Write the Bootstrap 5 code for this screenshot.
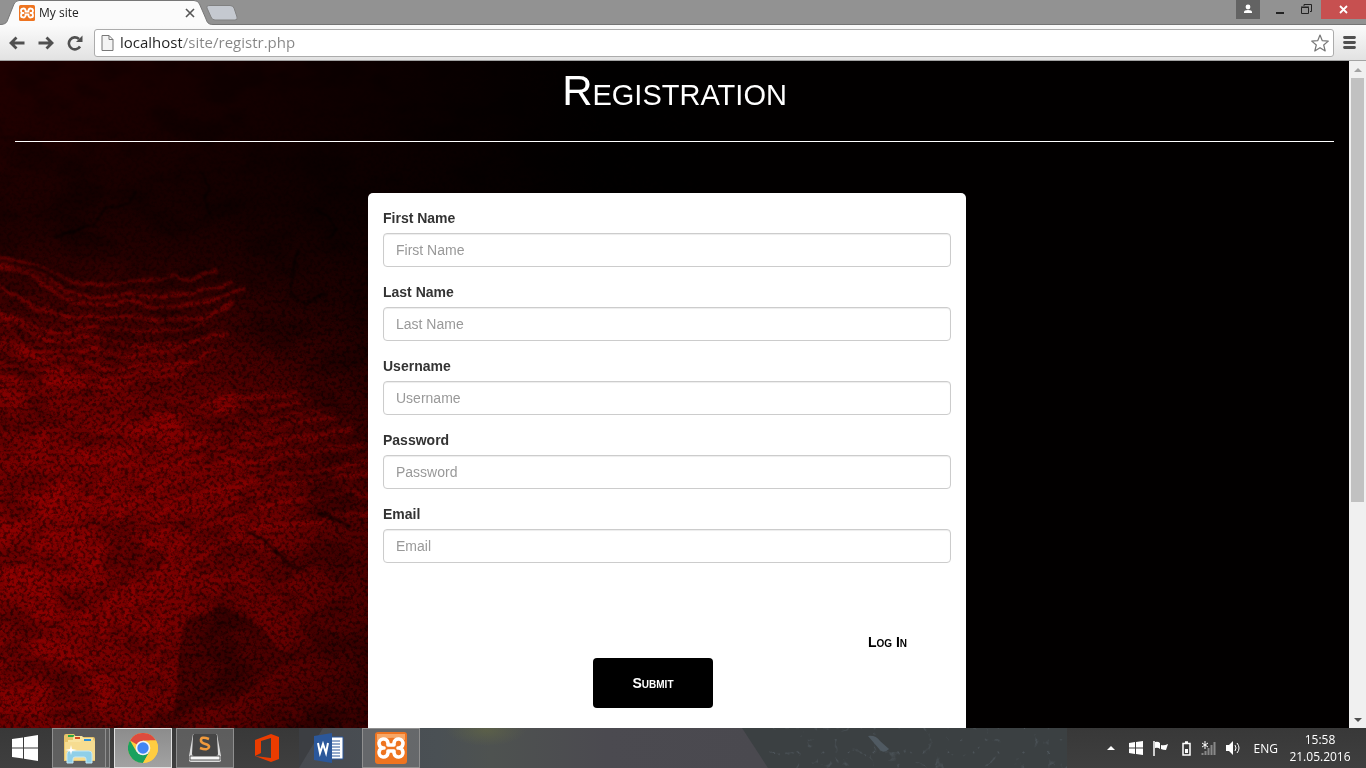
<!DOCTYPE html>
<html lang="en">
<head>
<meta charset="utf-8">
<meta name="viewport" content="width=device-width, initial-scale=1">
<title>My site</title>
<link href="https://cdn.jsdelivr.net/npm/bootstrap@5.3.0/dist/css/bootstrap.min.css" rel="stylesheet">
<style>
body { font-family: "Liberation Sans", Arial, sans-serif; font-size: 14px; line-height: 20px; background: #000; color: #333; }
button { font: inherit; }
svg { display: block; flex: none; }
.ui-font { font-family: "Open Sans", "Noto Sans", sans-serif; }
.bare { background: none; border: 0; padding: 0; }

/* browser window */
.tabstrip { height: 24px; background: #929292; }
.site-tab { width: 213px; height: 25px; padding: 0 18px 0 19px; z-index: 2; }
.tab-shape { position: absolute; inset: 0; }
.tab-title { font-size: 12px; color: #222; }
.new-tab { margin-left: -8px; padding-top: 5px; }
.win-btn { height: 19px; width: 26px; display: flex; align-items: center; justify-content: center; }
.win-user { background: #636363; width: 24px; margin-right: 7px; }
.win-close { background: #c75050; width: 45px; margin-left: 2px; }
.toolbar { height: 37px; background: linear-gradient(#fbfbfb, #e2e2e2); border-top: 1px solid #747474; border-bottom: 1px solid #a3a3a3; padding: 0 10px 0 9px; }
.nav-tools { gap: 13px; margin-right: 11px; }
.address { height: 28px; border: 1px solid #acacac; border-radius: 3px; background: #fff; padding: 0 4px 0 6px; margin-right: 9px; }
.address-input { font-size: 15px; line-height: 20px; outline: 0; min-width: 0; padding: 0 0 2px 2px; color: #858585; background: linear-gradient(90deg, #222 64px, #858585 64px); -webkit-background-clip: text; background-clip: text; -webkit-text-fill-color: transparent; }

/* page */
.page-body { background: #020000; }
.page-bg { position: absolute; inset: 0; width: 100%; height: 100%; }
.page-title { font-size: 42px; line-height: 46px; color: #fff; font-variant: small-caps; font-weight: 400; padding-top: 7px; margin: 0; }
.page-rule { margin: 27px 15px 51px; border-top: 1px solid #fff; opacity: 1; }
.form-grid { display: grid; grid-template-columns: 368fr 598fr 383fr; }
.signup { grid-column: 2; background: #fff; border-radius: 5px; padding: 15px 15px 60px; }
.signup .form-label { font-weight: 700; margin-bottom: 5px; display: block; }
.signup .form-control { height: 34px; padding: 6px 12px; font-size: 14px; line-height: 20px; border: 1px solid #ccc; border-radius: 4px; box-shadow: inset 0 1px 1px rgba(0,0,0,.075); }
.signup .form-control::placeholder { color: #999; }
.field { margin-bottom: 15px; }
.login-row { margin-top: 69px; padding-right: 44px; }
.login-link { color: #000; font-weight: 700; font-variant: small-caps; text-decoration: none; }
.submit-row { margin-top: 6px; padding-right: 28px; }
.submit-btn { width: 120px; height: 50px; background: #000; color: #fff; border: 0; border-radius: 4px; font-weight: 700; font-variant: small-caps; }

/* page scrollbar */
.scroll-col { width: 17px; background: #f0f0f0; }
.scroll-arrow { height: 17px; }
.scroll-thumb { height: 67%; width: 13px; background: #c1c1c1; }

/* taskbar */
.taskbar { height: 40px; background: linear-gradient(#383838, #3f3f3f); color: #fff; font-size: 12px; line-height: 17px; }
.wallpaper { position: absolute; left: 299px; top: 0; width: 768px; max-width: 60%; height: 40px; }
.start-btn { width: 52px; padding-left: 12px; }
.task-btn { width: 58px; height: 40px; margin-right: 4px; display: flex; align-items: center; justify-content: center; border: 1px solid transparent; padding: 0; background: none; }
.task-open { background: rgba(130,130,130,.5); border-color: #8f8f8f; }
.task-active { background: linear-gradient(#8c8c8c, #a2a2a2); border-color: #e0e0e0; }
.task-stack { width: 54px; margin-right: 0; }
.stack-edge { width: 4px; height: 40px; margin-right: 4px; background: #5d5d5d; border: 1px solid #8f8f8f; border-left: 0; }
.tray { gap: 10px; padding-right: 14px; }
.tray-gap { margin-right: 4px; }
.clock { width: 64px; }
</style>
</head>
<body>
<div class="vh-100 d-flex flex-column overflow-hidden">

  <header class="flex-shrink-0">
    <div class="tabstrip d-flex align-items-start ui-font">
      <div class="site-tab position-relative d-flex align-items-center">
        <svg class="tab-shape" width="213" height="25" viewBox="0 0 213 25" aria-hidden="true">
          <path d="M0 24.500C6 24.500 7 22 8 19L14 4Q15.500 .5 19 .5H194Q198 .5 199.500 4L206 19C207 22 208 24.500 213 24.500V26H0Z" fill="#fbfbfb" stroke="#777"/>
        </svg>
        <svg class="position-relative" width="16" height="16" viewBox="0 0 32 32" aria-hidden="true"><rect width="32" height="32" rx="3" fill="#ee7420"/><path d="M13 11A4.500 4.500 0 1 0 9 16A4.500 4.500 0 1 0 13 21V19H19V21A4.500 4.500 0 1 0 23 16A4.500 4.500 0 1 0 19 11V13H13Z" fill="none" stroke="#fff" stroke-width="3.600" stroke-linejoin="round"/></svg>
        <span class="position-relative tab-title ms-1 flex-grow-1">My site</span>
        <button class="bare position-relative" aria-label="Close tab"><svg width="10" height="10" viewBox="0 0 10 10"><path d="M1 1l8 8M9 1L1 9" stroke="#555" stroke-width="1.600"/></svg></button>
      </div>
      <button class="bare new-tab" aria-label="New tab"><svg width="34" height="16" viewBox="0 0 34 16"><path d="M5 .5H25Q28 .5 29 3L32 12Q33 15 30 15H10Q7 15 6 12L2 3Q1 .5 5 .5Z" fill="#c5c9d0" stroke="#818181"/></svg></button>
      <div class="ms-auto d-flex">
        <button class="bare win-btn win-user" aria-label="Profile"><svg width="10" height="12" viewBox="0 0 10 12" fill="#fff"><circle cx="5" cy="3" r="2.400"/><path d="M1 9V8Q1 6 5 6T9 8V9Z"/></svg></button>
        <button class="bare win-btn" aria-label="Minimize"><svg width="10" height="12" viewBox="0 0 10 12"><path d="M1 9H9" stroke="#222" stroke-width="2"/></svg></button>
        <button class="bare win-btn" aria-label="Restore"><svg width="11" height="11" viewBox="0 0 11 11" fill="none" stroke="#222"><path d="M3 2V.5H10.500V7.500H9"/><path d="M.5 3.500H7.500V9.500H.5ZM0 3H8"/></svg></button>
        <button class="bare win-btn win-close" aria-label="Close"><svg width="9" height="9" viewBox="0 0 9 9"><path d="M1 1l7 7M8 1L1 8" stroke="#fff" stroke-width="1.800"/></svg></button>
      </div>
    </div>
    <div class="toolbar d-flex align-items-center">
      <div class="nav-tools d-flex align-items-center">
        <button class="bare" aria-label="Back"><svg width="16" height="14" viewBox="0 0 16 14" fill="none" stroke="#505050" stroke-width="2.800"><path d="M15.500 7H2M7.500 1.500L2 7l5.500 5.500"/></svg></button>
        <button class="bare" aria-label="Forward"><svg width="16" height="14" viewBox="0 0 16 14" fill="none" stroke="#505050" stroke-width="2.800"><path d="M.5 7H14M8.500 1.500l5.500 5.500-5.500 5.500"/></svg></button>
        <button class="bare" aria-label="Reload"><svg width="16" height="16" viewBox="0 0 16 16"><path d="M13 11.500A6 6 0 1 1 12 4" fill="none" stroke="#505050" stroke-width="2.600"/><path d="M15.500 .5V7H9Z" fill="#505050"/></svg></button>
      </div>
      <div class="address d-flex align-items-center flex-grow-1 ui-font">
        <svg width="13" height="16" viewBox="0 0 13 16" aria-hidden="true"><path d="M1 .5H8L12 4.500V15.500H1ZM8 .5V4.500H12" fill="#f4f4f4" stroke="#777"/></svg>
        <input class="bare address-input flex-grow-1 ms-1" type="text" aria-label="Address" value="localhost/site/registr.php">
        <button class="bare" aria-label="Bookmark"><svg width="18" height="18" viewBox="0 0 18 18"><path d="M9 1l2.300 5.700 6 .4-4.600 3.900 1.500 6L9 13.700 3.800 17l1.500-6L.7 7.100l6-.4Z" fill="#fff" stroke="#777" stroke-width="1.200" stroke-linejoin="round"/></svg></button>
      </div>
      <button class="bare" aria-label="Menu"><svg width="13" height="13" viewBox="0 0 13 13" stroke="#505050" stroke-width="2.800" stroke-linecap="round"><path d="M1.500 1.500h10M1.500 6.500h10M1.500 11.500h10"/></svg></button>
    </div>
  </header>

  <div class="d-flex flex-grow-1 overflow-hidden">
    <main class="page-body flex-grow-1 position-relative overflow-hidden">
      <svg class="page-bg" viewBox="0 0 1349 667" preserveAspectRatio="none" aria-hidden="true">
        <defs>
          <radialGradient id="glow" gradientUnits="userSpaceOnUse" cx="0" cy="0" r="1" gradientTransform="translate(40 500) scale(620 450)">
            <stop offset="0" stop-color="#860000"/><stop offset=".38" stop-color="#700000"/><stop offset=".55" stop-color="#480000"/><stop offset=".72" stop-color="#220000"/><stop offset=".88" stop-color="#120000"/><stop offset="1" stop-color="#020000"/>
          </radialGradient>
          <linearGradient id="corner"><stop offset="0" stop-color="#200000"/><stop offset=".4" stop-color="#140000"/><stop offset="1" stop-color="#020000"/></linearGradient>
          <linearGradient id="fade" x1="0" y1="0" x2="0" y2="1"><stop offset="0" stop-color="#fff" stop-opacity="0"/><stop offset=".4" stop-color="#fff"/></linearGradient>
          <mask id="lower"><rect width="700" height="667" fill="url(#fade)"/></mask>
          <filter id="rough" x="-10%" y="-10%" width="120%" height="120%"><feTurbulence type="fractalNoise" baseFrequency=".02" numOctaves="5" seed="4" result="n"/><feDisplacementMap in="SourceGraphic" in2="n" scale="22" xChannelSelector="R" yChannelSelector="G"/><feGaussianBlur stdDeviation="1"/></filter>
          <filter id="grain" x="0" y="0" width="100%" height="100%"><feTurbulence type="fractalNoise" baseFrequency=".28" numOctaves="3" seed="7"/><feColorMatrix values="0 0 0 0 0  0 0 0 0 0  0 0 0 0 0  3.500 0 0 0 -1.500"/></filter>
          <filter id="clumps" x="0" y="0" width="100%" height="100%"><feTurbulence type="fractalNoise" baseFrequency=".02 .035" numOctaves="5" seed="11"/><feColorMatrix values="0 0 0 0 0  0 0 0 0 0  0 0 0 0 0  0 4 0 0 -1.800"/></filter>
          <path id="sag" d="M-100 120Q-20 235 80 246T230 235"/>
          <path id="arch" d="M0 190Q10 60 110 40T280 10"/>
        </defs>
        <rect width="1349" height="667" fill="#020000"/>
        <rect width="600" height="667" fill="url(#corner)"/>
        <rect width="700" height="667" fill="url(#glow)" style="mix-blend-mode:lighten"/>
        <g filter="url(#rough)" fill="none" stroke="#a00000">
          <g stroke-width="4" stroke-opacity=".5">
            <use href="#sag" y="-28" x="-10"/><use href="#sag" y="-14"/><use href="#sag" y="-4" x="10"/><use href="#sag" y="10"/><use href="#sag" y="22" x="-20"/><use href="#sag" y="34"/><use href="#sag" y="43" x="-30"/><use href="#sag" y="55" x="-10"/><use href="#sag" y="66" x="-40"/><use href="#sag" y="76" x="-50"/>
          </g>
          <g stroke-width="5" stroke-opacity=".4">
            <use href="#arch" x="20" y="320"/><use href="#arch" x="34" y="328"/><use href="#arch" x="46" y="340"/><use href="#arch" x="58" y="348"/><use href="#arch" x="74" y="360"/><use href="#arch" x="86" y="372"/><use href="#arch" x="104" y="388"/><use href="#arch" x="120" y="396"/><use href="#arch" x="136" y="412"/><use href="#arch" x="150" y="430"/>
          </g>
          <g stroke-width="24" stroke-opacity=".35">
            <path d="M-5 260Q20 310 80 325"/><path d="M-5 330Q60 360 30 420T20 530"/><path d="M45 560Q20 440 85 400T240 345"/><path d="M0 590Q60 560 110 640"/><path d="M-5 640H110"/>
          </g>
        </g>
        <path filter="url(#rough)" d="M175 590Q190 550 225 545L250 560 300 600 235 635 175 655Z" fill="#4c0000"/>
        <g filter="url(#rough)" fill="none" stroke="#060000" stroke-width="2" stroke-opacity=".8"><path d="M60 175L95 162 108 148 132 144 136 128M198 108L208 126 202 140 215 152M318 148L340 170 332 180M297 190L294 228 310 244 332 238M244 470L266 495 310 513M315 450L350 466M365 212V232"/></g>
        <rect width="700" height="667" filter="url(#clumps)" opacity=".25"/>
        <g mask="url(#lower)"><rect width="700" height="667" filter="url(#grain)" opacity=".5"/></g>
      </svg>
      <div class="position-relative">
        <h1 class="page-title text-center">Registration</h1>
        <hr class="page-rule">
        <div class="form-grid">
          <form class="signup">
            <div class="field"><label class="form-label" for="first">First Name</label><input class="form-control" id="first" type="text" placeholder="First Name"></div>
            <div class="field"><label class="form-label" for="last">Last Name</label><input class="form-control" id="last" type="text" placeholder="Last Name"></div>
            <div class="field"><label class="form-label" for="user">Username</label><input class="form-control" id="user" type="text" placeholder="Username"></div>
            <div class="field"><label class="form-label" for="pass">Password</label><input class="form-control" id="pass" type="password" placeholder="Password"></div>
            <div><label class="form-label" for="email">Email</label><input class="form-control" id="email" type="email" placeholder="Email"></div>
            <div class="login-row text-end"><a class="login-link" href="#">Log In</a></div>
            <div class="submit-row text-center"><button class="submit-btn" type="submit">Submit</button></div>
          </form>
        </div>
      </div>
    </main>
    <div class="scroll-col d-flex flex-column align-items-center flex-shrink-0" aria-hidden="true">
      <div class="scroll-arrow d-flex align-items-center"><svg width="8" height="4" viewBox="0 0 8 4"><path d="M0 4L4 0l4 4Z" fill="#a3a3a3"/></svg></div>
      <div class="flex-grow-1"><div class="scroll-thumb"></div></div>
      <div class="scroll-arrow d-flex align-items-center"><svg width="8" height="4" viewBox="0 0 8 4"><path d="M0 0L4 4l4-4Z" fill="#505050"/></svg></div>
    </div>
  </div>

  <footer class="taskbar position-relative flex-shrink-0 d-flex ui-font">
    <svg class="wallpaper" viewBox="0 0 768 40" preserveAspectRatio="none" aria-hidden="true">
      <defs>
        <linearGradient id="wall"><stop offset="0" stop-color="#474a50"/><stop offset=".18" stop-color="#4a5054"/><stop offset=".25" stop-color="#4e5250"/><stop offset=".4" stop-color="#4b4a50"/><stop offset=".6" stop-color="#4a494f"/></linearGradient>
        <radialGradient id="lamp"><stop offset="0" stop-color="#6b7040"/><stop offset="1" stop-color="#6b7040" stop-opacity="0"/></radialGradient>
        <filter id="veins" x="0" y="0" width="100%" height="100%"><feTurbulence type="turbulence" baseFrequency=".04" numOctaves="3" seed="3"/><feColorMatrix values="0 0 0 0 .12  0 0 0 0 .15  0 0 0 0 .18  -7 0 0 0 .8"/></filter>
      </defs>
      <rect width="768" height="40" fill="url(#wall)"/><path d="M0 0H24L0 40Z" fill="#3c3e42"/>
      <ellipse cx="187" cy="2" rx="40" ry="16" fill="url(#lamp)" opacity=".45"/>
      <path d="M443 0H768V40H469Z" fill="#3b4042"/>
      <rect x="470" width="298" height="40" filter="url(#veins)" opacity=".6"/>
      <path d="M569 8q8-1 12 5l9 8q-5 5-9 1Z" fill="#505a62"/>
    </svg>
    <div class="position-relative d-flex flex-grow-1">
      <button class="bare start-btn d-flex align-items-center" aria-label="Start"><svg width="26" height="26" viewBox="0 0 26 26" fill="#fff"><path d="M0 4L11 2.500V12.500H0ZM12 2.300L26 0V12.500H12ZM0 13.500H11V23.500L0 22ZM12 13.500H26V26L12 23.700Z"/></svg></button>
      <button class="task-btn task-open task-stack" aria-label="File Explorer"><svg width="34" height="32" viewBox="0 0 34 32"><path d="M2 29V4Q2 2 4 2H12L14 5H31Q33 5 33 7V29Z" fill="#e8c46a"/><path d="M6 3H12V5H6Z" fill="#2aa843"/><path d="M11 8V6Q11 4 13 4H20L22 6H31V28H6V8Z" fill="#f8e4a0"/><path d="M13 5h5v2h-5Z" fill="#d64a20"/><path d="M3 10H18L20 8H31Q33 8 33 10V28H3Z" fill="#f6dc90"/><path d="M22 7H29V9H22Z" fill="#2d8fd6"/><path d="M5 31V22Q5 19 8 19H27Q30 19 30 22V31H24V27Q24 25 22 25H13Q11 25 11 27V31Z" fill="#8fcfe8" stroke="#c4e8f6"/><path d="M9 13l1 4 5 1-5 1-1 4-1-4-5-1 5-1Z" fill="#fff"/></svg></button>
      <div class="stack-edge"></div>
      <button class="task-btn task-active" aria-label="Chrome"><svg width="30" height="30" viewBox="0 0 30 30"><circle cx="15" cy="15" r="15" fill="#ffcd41"/><path d="M15 15L2 7.500A15 15 0 0 1 28 7.500H15Z" fill="#dd4b3e"/><path d="M2 7.500A15 15 0 0 0 15 30L21.500 18.800 15 15 8.500 18.700Z" fill="#1aa15f"/><path d="M28 7.500A15 15 0 0 1 15 30L21.500 18.700V7.500Z" fill="#ffcd41"/><circle cx="15" cy="15" r="7.300" fill="#f4f4f4"/><circle cx="15" cy="15" r="5.700" fill="#4285f4"/></svg></button>
      <button class="task-btn task-open" aria-label="Sublime Text"><svg width="32" height="30" viewBox="0 0 32 30"><path d="M4 1H28L32 23V27Q32 29 30 29H2Q0 29 0 27V23Z" fill="#ddd"/><path d="M1 23H31V27H1Z" fill="#f5f5f5" stroke="#555"/><path d="M5 1H27Q28 1 28 3L29 21Q29 23 27 23H5Q3 23 3 21L4 3Q4 1 5 1Z" fill="#464646"/><path d="M20 6Q12 3 12 7C11 12 21 10 20 14Q19 18 11 15" fill="none" stroke="#f09a3c" stroke-width="2.600"/></svg></button>
      <button class="task-btn" aria-label="Office"><svg width="26" height="30" viewBox="0 0 26 30"><path d="M1 7L17 1 25 4V26L17 29 1 23 17 25V5L7 8V20L1 23Z" fill="#eb3c00"/></svg></button>
      <button class="task-btn" aria-label="Word"><svg width="30" height="30" viewBox="0 0 30 30"><path d="M17 4H29V26H17Z" fill="#fff" stroke="#2b579a"/><path d="M18 8H26M18 11H26M18 14H26M18 17H26M18 20H26M18 23H26" stroke="#2b579a"/><path d="M0 3L18 0V30L0 27Z" fill="#2b579a"/><path d="M4 10L6 20 9 11 12 20 14 10" fill="none" stroke="#fff" stroke-width="2"/></svg></button>
      <button class="task-btn task-open" aria-label="XAMPP"><svg width="32" height="32" viewBox="0 0 32 32"><rect width="32" height="32" rx="3" fill="#ee7420"/><path d="M2 2H30V8Q16 3 2 9Z" fill="#f7a766"/><path d="M13 11A4.500 4.500 0 1 0 9 16A4.500 4.500 0 1 0 13 21V19H19V21A4.500 4.500 0 1 0 23 16A4.500 4.500 0 1 0 19 11V13H13Z" fill="none" stroke="#fff" stroke-width="3.600" stroke-linejoin="round"/></svg></button>
      <div class="tray ms-auto d-flex align-items-center">
        <button class="bare tray-gap" aria-label="Show hidden icons"><svg width="8" height="4" viewBox="0 0 8 4"><path d="M0 4L4 0l4 4Z" fill="#fff"/></svg></button>
        <svg width="14" height="14" viewBox="0 0 14 14" fill="#fff" aria-hidden="true"><path d="M0 2L6 1V6.500H0ZM7 1L14 0V6.500H7ZM0 7.500H6V13L0 12ZM7 7.500H14V14L7 13Z"/></svg>
        <svg class="tray-gap" width="15" height="15" viewBox="0 0 15 15" aria-hidden="true"><path d="M1 0V15" stroke="#fff" stroke-width="1.500"/><path d="M2 1Q5 0 7 2V8Q5 6 2 7ZM8 4Q11 5 15 3L13 9Q10 9 8 8Z" fill="#fff"/></svg>
        <svg width="9" height="15" viewBox="0 0 9 15" aria-hidden="true"><path d="M1 2.500H8V14H1ZM3 1H6" fill="none" stroke="#fff" stroke-width="1.500"/><path d="M3 8H6V12H3Z" fill="#fff"/></svg>
        <svg width="15" height="14" viewBox="0 0 15 14" aria-hidden="true"><path d="M1.500 14V12M4.500 14V10M7.500 14V7M10.500 14V4M13.500 14V1" stroke="#898989" stroke-width="2"/><path d="M4 0V8M1 2L7 6M7 2L1 6" stroke="#fff"/></svg>
        <svg class="tray-gap" width="14" height="14" viewBox="0 0 14 14" aria-hidden="true"><path d="M0 4H3L7 0V14L3 10H0Z" fill="#fff"/><path d="M9 4Q11 7 9 10M11 2Q15 7 11 12" fill="none" stroke="#fff"/></svg>
        <span>ENG</span>
        <div class="clock text-center">15:58<br>21.05.2016</div>
      </div>
    </div>
  </footer>
</div>
<script src="https://cdn.jsdelivr.net/npm/bootstrap@5.3.0/dist/js/bootstrap.bundle.min.js"></script>
</body>
</html>
